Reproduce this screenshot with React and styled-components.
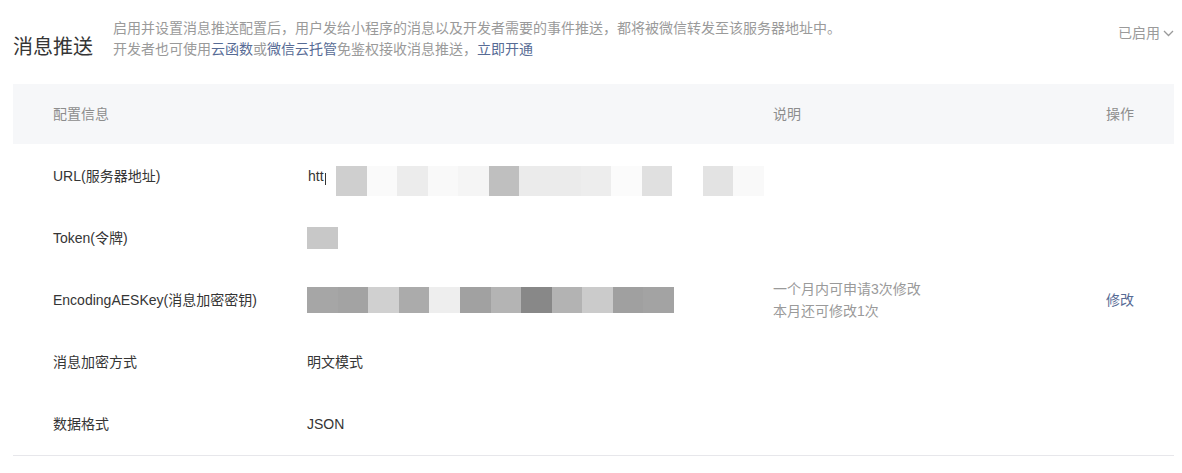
import React from "react";
import styled, { createGlobalStyle } from "styled-components";

const GlobalStyle = createGlobalStyle`
  html, body { margin: 0; padding: 0; background: #fff; }
  body {
    font-family: "Liberation Sans", "Noto Sans CJK SC", sans-serif;
    font-size: 14px;
    color: #353535;
  }
`;

const Page = styled.div`
  padding: 0 8px 0 13px;
`;

const HeaderBar = styled.div`
  display: flex;
  justify-content: space-between;
  align-items: flex-start;
  padding-top: 18px;
  height: 66px;
`;

const TitleGroup = styled.div`
  display: flex;
  align-items: last baseline;
  gap: 20px;
`;

const Title = styled.h2`
  margin: 0;
  font-size: 20px;
  font-weight: 400;
  line-height: 28px;
  color: #353535;
`;

const Desc = styled.div`
  font-size: 14px;
  line-height: 21px;
  color: #9a9a9a;
`;

const Link = styled.a`
  color: #576b95;
  text-decoration: none;
  cursor: pointer;
`;

const Status = styled.div`
  display: flex;
  align-items: center;
  gap: 3px;
  margin-top: 5px;
  font-size: 14px;
  line-height: 21px;
  color: #9a9a9a;
  cursor: pointer;
`;

const Table = styled.div`
  border-bottom: 1px solid #e7e7eb;
`;

const Row = styled.div`
  display: grid;
  grid-template-columns: 254px 466px 1fr 28px;
  align-items: center;
  padding: 0 40px;
  height: ${(p) => (p.$head ? 60 : 62)}px;
  background: ${(p) => (p.$head ? "#f6f7f9" : "transparent")};
  color: ${(p) => (p.$head ? "#8d8d8d" : "#353535")};
  margin-bottom: ${(p) => (p.$head ? 1 : 0)}px;
  font-size: 14px;
  line-height: 22px;
`;

const Cell = styled.div`
  white-space: nowrap;
  display: flex;
  align-items: center;
`;

const Note = styled.div`
  color: #9a9a9a;
  line-height: 22px;
  white-space: nowrap;
`;

const UrlStart = styled.span`
  position: relative;
  display: inline-block;
  width: 20px;
  margin-left: 1px;
  margin-right: 8px;
  white-space: nowrap;
  &::after {
    content: "";
    position: absolute;
    left: 17px;
    top: 8px;
    width: 1.4px;
    height: 12px;
    background: #353535;
  }
`;

const Mosaic = styled.div`
  display: grid;
  grid-template-columns: repeat(${(p) => p.$count}, 1fr);
  width: ${(p) => p.$width}px;
  height: ${(p) => p.$height}px;
  margin-top: ${(p) => p.$offset || 0}px;
`;

const Tile = styled.div`
  background: ${(p) => p.$c};
`;

const urlTiles = [
  "#cfcfcf", "#fafafa", "#ececec", "#f9f9f9", "#f5f5f5", "#bfbfbf", "#ebebeb",
  "#ebebeb", "#ededed", "#fbfbfb", "#e0e0e0", "#ffffff", "#e3e3e3", "#f9f9f9",
];
const keyTiles = [
  "#a6a6a6", "#a3a3a3", "#d0d0d0", "#ababab", "#eeeeee", "#a1a1a1",
  "#b4b4b4", "#888888", "#b3b3b3", "#cbcbcb", "#a0a0a0", "#a3a3a3",
];

function MosaicBar({ tiles, width, height, offset }) {
  return (
    <Mosaic $count={tiles.length} $width={width} $height={height} $offset={offset}>
      {tiles.map((c, i) => (
        <Tile key={i} $c={c} />
      ))}
    </Mosaic>
  );
}

function Chevron() {
  return (
    <svg width="11" height="7" viewBox="0 0 11 7" fill="none">
      <polyline points="1,1 5.5,5.5 10,1" stroke="#9a9a9a" strokeWidth="1.3" />
    </svg>
  );
}

export default function App() {
  return (
    <>
      <GlobalStyle />
      <Page>
        <HeaderBar>
          <TitleGroup>
            <Title>消息推送</Title>
            <Desc>
              <div>启用并设置消息推送配置后，用户发给小程序的消息以及开发者需要的事件推送，都将被微信转发至该服务器地址中。</div>
              <div>
                开发者也可使用<Link>云函数</Link>或<Link>微信云托管</Link>免鉴权接收消息推送，<Link>立即开通</Link>
              </div>
            </Desc>
          </TitleGroup>
          <Status>
            已启用
            <Chevron />
          </Status>
        </HeaderBar>
        <Table>
          <Row $head>
            <Cell>配置信息</Cell>
            <Cell />
            <Cell>说明</Cell>
            <Cell>操作</Cell>
          </Row>
          <Row>
            <Cell>URL(服务器地址)</Cell>
            <Cell>
              <UrlStart>htt</UrlStart>
              <MosaicBar tiles={urlTiles} width={428} height={30} offset={10} />
            </Cell>
            <Cell />
            <Cell />
          </Row>
          <Row>
            <Cell>Token(令牌)</Cell>
            <Cell>
              <MosaicBar tiles={["#c8c8c8"]} width={31} height={22} />
            </Cell>
            <Cell />
            <Cell />
          </Row>
          <Row>
            <Cell>EncodingAESKey(消息加密密钥)</Cell>
            <Cell>
              <MosaicBar tiles={keyTiles} width={367} height={26} />
            </Cell>
            <Cell>
              <Note>
                <div>一个月内可申请3次修改</div>
                <div>本月还可修改1次</div>
              </Note>
            </Cell>
            <Cell>
              <Link>修改</Link>
            </Cell>
          </Row>
          <Row>
            <Cell>消息加密方式</Cell>
            <Cell>明文模式</Cell>
            <Cell />
            <Cell />
          </Row>
          <Row>
            <Cell>数据格式</Cell>
            <Cell>JSON</Cell>
            <Cell />
            <Cell />
          </Row>
        </Table>
      </Page>
    </>
  );
}
